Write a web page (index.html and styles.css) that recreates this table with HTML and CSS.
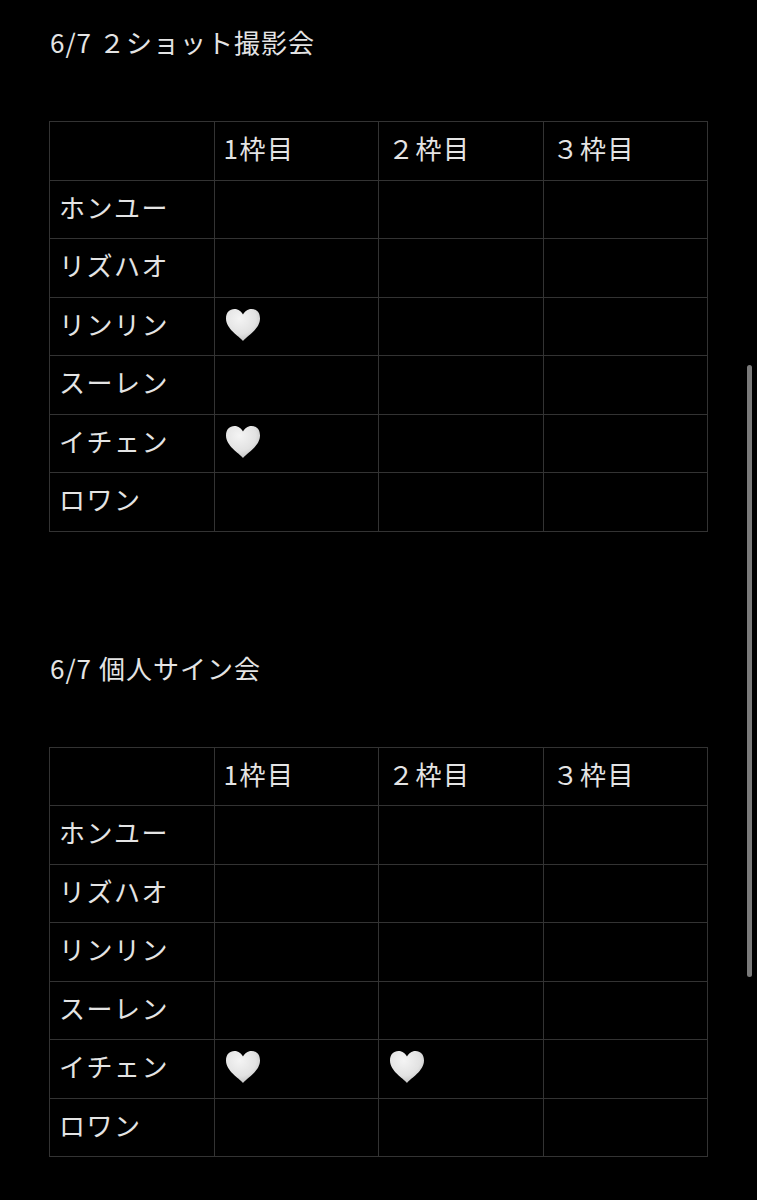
FILE: index.html
```html
<!DOCTYPE html>
<html lang="ja">
<head>
<meta charset="utf-8">
<link rel="stylesheet" href="styles.css">
</head>
<body>
<svg width="0" height="0" class="defs">
  <defs>
    <radialGradient id="hg" cx="0.4" cy="0.3" r="0.8">
      <stop offset="0" stop-color="#f4f4f4"/>
      <stop offset="0.6" stop-color="#e2e2e2"/>
      <stop offset="1" stop-color="#b8b8b8"/>
    </radialGradient>
    <symbol id="heart" viewBox="0 0 36 34">
      <path d="M18 33 C14 28 1 21 1 10.5 C1 4.5 4.5 1 9.5 1 C13.5 1 16.5 3.5 18 6.5 C19.5 3.5 22.5 1 26.5 1 C31.5 1 35 4.5 35 10.5 C35 21 22 28 18 33 Z" fill="url(#hg)"/>
    </symbol>
  </defs>
</svg>
<section class="block first">
  <h2 class="title">6/7 ２ショット撮影会</h2>
  <table class="grid">
    <tr><td></td><td>1枠目</td><td>２枠目</td><td>３枠目</td></tr>
    <tr><td>ホンユー</td><td></td><td></td><td></td></tr>
    <tr><td>リズハオ</td><td></td><td></td><td></td></tr>
    <tr><td>リンリン</td><td><svg class="heart"><use href="#heart"/></svg></td><td></td><td></td></tr>
    <tr><td>スーレン</td><td></td><td></td><td></td></tr>
    <tr><td>イチェン</td><td><svg class="heart"><use href="#heart"/></svg></td><td></td><td></td></tr>
    <tr><td>ロワン</td><td></td><td></td><td></td></tr>
  </table>
</section>
<section class="block second">
  <h2 class="title">6/7 個人サイン会</h2>
  <table class="grid">
    <tr><td></td><td>1枠目</td><td>２枠目</td><td>３枠目</td></tr>
    <tr><td>ホンユー</td><td></td><td></td><td></td></tr>
    <tr><td>リズハオ</td><td></td><td></td><td></td></tr>
    <tr><td>リンリン</td><td></td><td></td><td></td></tr>
    <tr><td>スーレン</td><td></td><td></td><td></td></tr>
    <tr><td>イチェン</td><td><svg class="heart"><use href="#heart"/></svg></td><td><svg class="heart"><use href="#heart"/></svg></td><td></td></tr>
    <tr><td>ロワン</td><td></td><td></td><td></td></tr>
  </table>
</section>
<div class="scrollbar"></div>
</body>
</html>
```
FILE: styles.css
```css
html, body {
  margin: 0;
  padding: 0;
  background: #000;
}
body {
  color: #e4e4e4;
  font-family: "Noto Sans CJK JP", "Noto Sans", sans-serif;
  width: 757px;
  height: 1200px;
  overflow: hidden;
  position: relative;
}
.defs {
  position: absolute;
}
.block {
  padding-left: 49px;
}
.first {
  padding-top: 24px;
}
.second {
  padding-top: 118px;
}
.title {
  margin: 0 0 61px 1px;
  font-size: 26px;
  font-weight: 400;
  line-height: 36px;
  letter-spacing: 1px;
}
.grid {
  border-collapse: collapse;
  width: 659px;
  table-layout: fixed;
}
.grid td {
  border: 1px solid #333;
  height: 58.5px;
  padding: 0 0 5px 9px;
  font-size: 26px;
  line-height: 30px;
  letter-spacing: 1.5px;
  vertical-align: middle;
  box-sizing: border-box;
}
.heart {
  display: block;
  width: 36px;
  height: 34px;
  margin-left: 1px;
  margin-top: 2px;
}
.scrollbar {
  position: absolute;
  left: 747px;
  top: 365px;
  width: 5px;
  height: 612px;
  border-radius: 3px;
  background: #7a7a7a;
}
```
